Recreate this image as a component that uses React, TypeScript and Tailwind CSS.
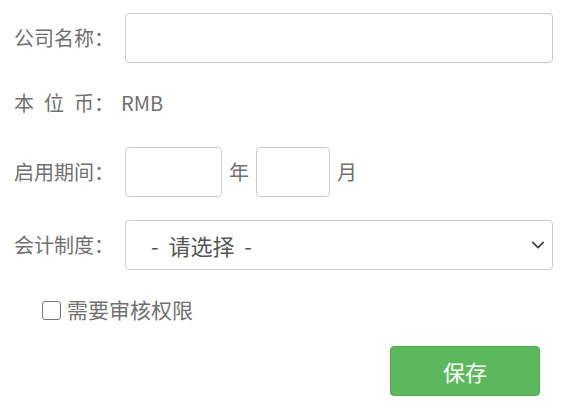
export default function App() {
  const font = { fontFamily: '"Microsoft YaHei", "Noto Sans CJK SC", "Liberation Sans", sans-serif' };

  return (
    <div className="w-[579px] h-[411px] bg-white pl-[14px] text-[20px] text-[#707070]" style={font}>
      {/* 公司名称 */}
      <div className="flex items-center pt-[13px]">
        <label className="w-[111px] shrink-0">公司名称：</label>
        <input className="w-[428px] h-[50px] rounded-[4px] border border-[#cccccc] bg-white px-3 outline-none" />
      </div>

      {/* 本位币 */}
      <div className="flex items-center h-[30px] mt-[25px]">
        <span className="mr-[10px]">本</span>
        <span className="mr-[10px]">位</span>
        <span>币</span>
        <span className="w-[20px] shrink-0">：</span>
        <span className="ml-[7px]">RMB</span>
      </div>

      {/* 启用期间 */}
      <div className="flex items-center mt-[29px]">
        <label className="w-[111px] shrink-0">启用期间：</label>
        <input className="w-[97px] h-[50px] rounded-[4px] border border-[#cccccc] bg-white px-2 outline-none" />
        <span className="mx-[7px]">年</span>
        <input className="w-[74px] h-[50px] rounded-[4px] border border-[#cccccc] bg-white px-2 outline-none" />
        <span className="ml-[7px]">月</span>
      </div>

      {/* 会计制度 */}
      <div className="flex items-center mt-[23px]">
        <label className="w-[111px] shrink-0">会计制度：</label>
        <div className="relative w-[428px] h-[50px] rounded-[4px] border border-[#cccccc] bg-white flex items-center pl-[25px] text-[22px] text-[#555555]">
          <span className="whitespace-pre">-  请选择  -</span>
          <svg className="absolute right-[7px] top-1/2 -translate-y-1/2" width="14" height="14" viewBox="0 0 16 16" fill="none">
            <path d="M2 5l6 6 6-6" stroke="#444" strokeWidth="2" strokeLinecap="round" strokeLinejoin="round" />
          </svg>
        </div>
      </div>

      {/* 需要审核权限 */}
      <div className="flex items-center h-[30px] mt-[25px] pl-[28px]">
        <span className="w-[19px] h-[19px] rounded-[3px] border border-[#767676] bg-white mr-[6px]" />
        <span className="text-[21px]">需要审核权限</span>
      </div>

      {/* 保存 */}
      <div className="flex mt-[21px] pl-[376px]">
        <button className="w-[150px] h-[50px] rounded-[4px] bg-[#5cb85c] border border-[#4cae4c] text-white text-[22px]">
          保存
        </button>
      </div>
    </div>
  );
}
